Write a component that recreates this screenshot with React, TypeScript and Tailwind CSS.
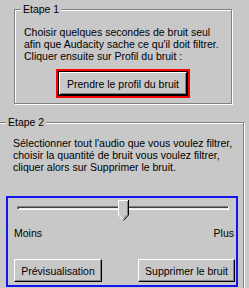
import type { ReactNode } from 'react'

function WinButton({ children, className }: { children: ReactNode; className?: string }) {
  return (
    <div
      className={
        'flex items-center justify-center border border-t-white border-l-white border-r-black border-b-black bg-[#c8c8c8] shadow-[inset_-1px_-1px_0_#808080] ' +
        (className ?? '')
      }
    >
      {children}
    </div>
  )
}

function SliderThumb() {
  return (
    <svg width="11" height="21" viewBox="0 0 11 21" className="absolute left-[101px] top-0">
      <path d="M0.5 0.5 H10.5 V15 L5.5 20.5 L0.5 15 Z" fill="#c8c8c8" />
      <path d="M0.5 15 V0.5 H10" fill="none" stroke="#fff" />
      <path d="M10.5 0 V15 L5.5 20.5" fill="none" stroke="#000" />
      <path d="M9.5 1 V14.6 L5.5 19" fill="none" stroke="#808080" />
      <path d="M0.5 15 L5 19.5" fill="none" stroke="#fff" />
    </svg>
  )
}

export default function App() {
  return (
    <div className="h-[288px] w-[249px] overflow-hidden bg-[#c8c8c8] pt-[9px] font-['Liberation_Sans',Arial,sans-serif] text-[10.5px] leading-[12px] text-black">
      {/* Etape 1 */}
      <div className="relative ml-[14px] h-[95px] w-[218px] border border-[#808080] pl-[9px] pt-[16px] shadow-[inset_1px_1px_0_#fff,1px_1px_0_#fff]">
        <span className="absolute left-[6px] top-[-7px] bg-[#c8c8c8] px-[2px]">Etape 1</span>
        <p>
          Choisir quelques secondes de bruit seul
          <br />
          afin que Audacity sache ce qu'il doit filtrer.
          <br />
          Cliquer ensuite sur Profil du bruit :
        </p>
        <div className="ml-[32px] mt-[7px] h-[29px] w-[134px] border-2 border-[#ff0000]">
          <div className="h-full w-full border border-black">
            <WinButton className="h-full w-full">Prendre le profil du bruit</WinButton>
          </div>
        </div>
      </div>

      {/* Etape 2 */}
      <div className="relative ml-[-10px] mt-[18px] h-[200px] w-[254px] border border-[#808080] pl-[22px] pt-[14px] shadow-[inset_1px_1px_0_#fff,1px_1px_0_#fff]">
        <span className="absolute left-[15px] top-[-7px] bg-[#c8c8c8] px-[2px]">Etape 2</span>
        <p>
          Sélectionner tout l'audio que vous voulez filtrer,
          <br />
          choisir la quantité de bruit vous voulez filtrer,
          <br />
          cliquer alors sur Supprimer le bruit.
        </p>
        <div className="ml-[-7px] mt-[23px] h-[91px] w-[232px] border-2 border-[#1414ee]">
          <div className="relative ml-[9px] mt-[2px] h-[21px] w-[212px]">
            <div className="absolute left-0 right-0 top-[6px] h-[4px] border border-t-[#808080] border-l-[#808080] border-r-white border-b-white bg-[#e8e8e8] shadow-[inset_1px_1px_0_#404040]" />
            <SliderThumb />
          </div>
          <div className="mt-[6px] flex justify-between pl-[6px] pr-[2px]">
            <span>Moins</span>
            <span>Plus</span>
          </div>
          <div className="mt-[20px] flex justify-between pl-[6px] pr-[1px]">
            <WinButton className="h-[23px] w-[88px]">Prévisualisation</WinButton>
            <WinButton className="h-[23px] w-[97px]">Supprimer le bruit</WinButton>
          </div>
        </div>
      </div>
    </div>
  )
}
